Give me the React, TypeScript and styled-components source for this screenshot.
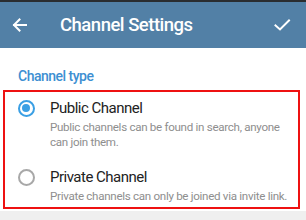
import React from 'react';
import styled, { createGlobalStyle } from 'styled-components';

const Global = createGlobalStyle({
	'html, body': {
		margin: 0,
		padding: 0,
		background: '#fff',
	},
	body: {
		fontFamily: 'Roboto, "Noto Sans", sans-serif',
	},
});

const Screen = styled.div({
	width: 306,
	height: 220,
	overflow: 'hidden',
	display: 'flex',
	flexDirection: 'column',
	background: '#efefef',
});

const StatusBar = styled.div({
	height: 2,
	background: '#2a2d30',
});

const Toolbar = styled.header({
	height: 46,
	display: 'flex',
	alignItems: 'center',
	background: '#5280a6',
	color: '#fff',
});

const IconButton = styled.div<{ $w: number }>((p) => ({
	width: p.$w,
	height: 46,
	display: 'flex',
	alignItems: 'center',
	justifyContent: 'center',
	flexShrink: 0,
}));

const Title = styled.h1({
	flex: 1,
	margin: 0,
	marginLeft: 20,
	fontSize: 18.5,
	fontWeight: 500,
	letterSpacing: -0.5,
});

const Section = styled.section({
	background: '#fff',
	padding: '18px 0 2px',
});

const SectionLabel = styled.div({
	padding: '0 18px',
	fontSize: 14,
	lineHeight: '20px',
	fontWeight: 500,
	letterSpacing: -0.5,
	color: '#3d8fd2',
	marginBottom: 4,
});

const Highlight = styled.div({
	margin: '0 6px 0 3px',
	border: '2px solid #ee1111',
});

const Option = styled.div<{ $pb: number }>((p) => ({
	display: 'flex',
	alignItems: 'flex-start',
	padding: `6px 4px ${p.$pb}px 11px`,
}));

const RadioWrap = styled.div({
	width: 20,
	height: 20,
	display: 'flex',
	alignItems: 'center',
	justifyContent: 'center',
	marginRight: 14,
	flexShrink: 0,
});

const Radio = styled.span<{ $on?: boolean }>((p) => ({
	width: 17,
	height: 17,
	boxSizing: 'border-box',
	borderRadius: '50%',
	border: `2px solid ${p.$on ? '#3a9fe4' : '#a8a8a8'}`,
	display: 'flex',
	alignItems: 'center',
	justifyContent: 'center',
	'&:after': {
		content: '""',
		display: p.$on ? 'block' : 'none',
		width: 8,
		height: 8,
		borderRadius: '50%',
		background: '#3a9fe4',
	},
}));

const Texts = styled.div({
	flex: 1,
});

const OptionTitle = styled.div({
	fontSize: 15,
	lineHeight: '20px',
	letterSpacing: -0.5,
	color: '#222',
});

const OptionHint = styled.div({
	marginTop: 2,
	fontSize: 11.6,
	lineHeight: '15px',
	letterSpacing: -0.3,
	color: '#8e8e8e',
});

export default function App() {
	return (
		<Screen>
			<Global />
			<StatusBar />
			<Toolbar>
				<IconButton $w={40}>
					<svg width="18" height="16" viewBox="0 0 18 16" fill="none" stroke="#fff" strokeWidth="2" strokeLinecap="square">
						<path d="M3 8h12M8.5 2.5L3 8l5.5 5.5" />
					</svg>
				</IconButton>
				<Title>Channel Settings</Title>
				<IconButton $w={49}>
					<svg width="18" height="14" viewBox="0 0 18 14" fill="none" stroke="#fff" strokeWidth="2" strokeLinecap="square">
						<path d="M2.5 7.5l4.5 4L16 2.5" />
					</svg>
				</IconButton>
			</Toolbar>
			<Section>
				<SectionLabel>Channel type</SectionLabel>
				<Highlight>
					<Option $pb={11}>
						<RadioWrap>
							<Radio $on />
						</RadioWrap>
						<Texts>
							<OptionTitle>Public Channel</OptionTitle>
							<OptionHint>Public channels can be found in search, anyone can join them.</OptionHint>
						</Texts>
					</Option>
					<Option $pb={3}>
						<RadioWrap>
							<Radio />
						</RadioWrap>
						<Texts>
							<OptionTitle>Private Channel</OptionTitle>
							<OptionHint>Private channels can only be joined via invite link.</OptionHint>
						</Texts>
					</Option>
				</Highlight>
			</Section>
		</Screen>
	);
}
